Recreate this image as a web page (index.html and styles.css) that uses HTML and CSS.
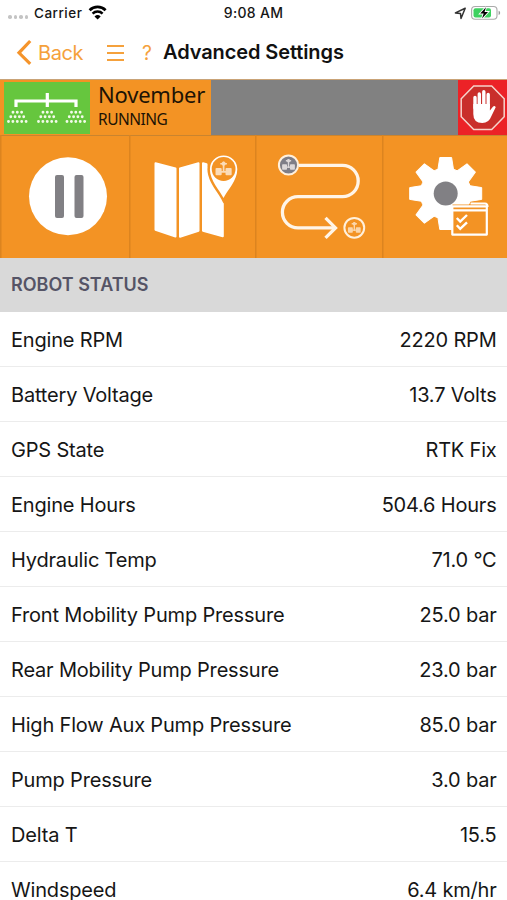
FILE: index.html
```html
<!DOCTYPE html>
<html lang="en">
<head>
<meta charset="utf-8">
<title>Advanced Settings</title>
<link rel="stylesheet" href="styles.css">
</head>
<body>
<svg class="defs" width="0" height="0" aria-hidden="true">
  <symbol id="robot" viewBox="0 0 20 20">
    <path d="M10 2.5v12M6.500 5h7M5 13.500h10" fill="none" stroke="currentColor" stroke-width="1.800"/>
    <circle cx="10" cy="5" r="2.200" fill="currentColor"/>
    <rect x="1.500" y="9.500" width="6.500" height="7.500" rx="1" fill="currentColor"/>
    <rect x="12" y="9.500" width="6.500" height="7.500" rx="1" fill="currentColor"/>
  </symbol>
</svg>
<div class="status-bar">
  <div class="carrier">
    <span class="dots"><i></i><i></i><i></i><i></i></span>
    <span class="carrier-name">Carrier</span>
    <svg width="20" height="16" viewBox="88 5 20 16">
      <path d="M89.6 10.2a11.2 11.2 0 0 1 16 0" fill="none" stroke="#000" stroke-width="2.700"/>
      <path d="M92.6 13.7a7 7 0 0 1 10 0" fill="none" stroke="#000" stroke-width="2.500"/>
      <path d="M97.6 19.600l-3.100-3.100a4.500 4.500 0 0 1 6.200 0z"/>
    </svg>
  </div>
  <time class="clock">9:08 AM</time>
  <div class="indicators">
    <svg width="52" height="18" viewBox="453 4 52 18">
      <path d="M465.2 8.2l-9.8 4.7 5.1.6.5 5z" fill="none" stroke="#333" stroke-width="1.5" stroke-linejoin="round"/>
      <rect x="471.6" y="6.5" width="25.4" height="12.8" rx="3.5" fill="#fff" stroke="#aaa" stroke-width="1.1"/>
      <rect x="473.5" y="8.3" width="17.5" height="9.2" rx="2" fill="#3ed160"/>
      <path d="M498.6 10.8v4.2q1.6-.5 1.6-2.1t-1.6-2.1z" fill="#999"/>
      <path d="M486 7.2l-5.8 6.4h3.5l-1.7 5 6-6.6h-3.5z" stroke="#fff" stroke-width="1.8" paint-order="stroke"/>
    </svg>
  </div>
</div>
<header class="nav">
  <svg class="chevron" width="17" height="28" viewBox="15 39 17 28"><path d="M30.2 41L19 52.8l11.2 11" fill="none" stroke="#f5942b" stroke-width="3.2"/></svg>
  <a class="back">Back</a>
  <span class="menu"><i></i><i></i><i></i></span>
  <span class="help">?</span>
  <h1>Advanced Settings</h1>
</header>
<section class="robot-bar">
  <div class="robot">
    <svg class="sprayer" width="86" height="52" viewBox="4 81 86 52">
      <path d="M16 106v-6h60v6M47.300 92v14" fill="none" stroke="#fff" stroke-width="3.200"/>
      <g fill="none" stroke="#f2fbe9" stroke-width="2.900" stroke-linecap="round">
        <path stroke-dasharray="0 4.300" d="M13 111.200h9M43 111.200h9M71.500 111.200h9"/>
        <path stroke-dasharray="0 4.300" d="M10.800 115.800h13.200M40.800 115.800h13.200M69.300 115.800h13.200"/>
        <path stroke-dasharray="0 4.400" d="M8.500 120.500h18M38.500 120.500h18M67 120.500h18"/>
      </g>
    </svg>
    <div class="robot-label"><strong>November</strong><span>RUNNING</span></div>
  </div>
  <svg class="stop" width="49" height="55" viewBox="458 80 49 55">
    <path d="M473.700 86h18l12.500 12.700v18L491.700 129.500h-18L461.200 116.700v-18z" fill="#c92f2b" stroke="#f6d4cc" stroke-width="1.500"/>
    <path d="M475 108V97.500M479.300 106V94M483.800 106V91.800M488.200 107V94.500" stroke="#fff" stroke-width="3.400" stroke-linecap="round"/>
    <path d="M473.300 104h16.600v6.500l3-3.800q1.800-1.500 2.800.5l-4.500 9.300q-2.300 6.500-8.900 6.500-9 0-9-9z" fill="#fff"/>
  </svg>
</section>
<nav class="actions">
  <div class="tile">
    <svg width="129" height="123" viewBox="0 135 129 123">
      <circle cx="68" cy="196.300" r="39" fill="#fff"/>
      <rect x="55" y="175" width="9" height="43" rx="2" fill="#818084"/>
      <rect x="74.500" y="175" width="9" height="43" rx="2" fill="#818084"/>
    </svg>
  </div>
  <div class="tile">
    <svg width="126" height="123" viewBox="129 135 126 123">
      <g fill="#fff" stroke="#fff" stroke-width="2" stroke-linejoin="round">
        <path d="M155.500 163.200l20 5.300v68l-20-6.700z"/>
        <path d="M180 168.500l18.500-5.300v67.500l-18.500 6z"/>
        <path d="M203 163.200l3.500 1q.3 10 16.300 37v35l-19.800-5.500z"/>
      </g>
      <path d="M223.500 198c-3.500-7-13.600-17.500-13.600-28.700a13.700 13.700 0 0 1 27.400 0c0 11.200-10.300 21.700-13.800 28.700z" fill="#fff" stroke="#f39324" stroke-width="5" paint-order="stroke"/>
      <circle cx="223.600" cy="169" r="11.900" fill="#f39324"/>
      <use href="#robot" x="214.100" y="159" width="19" height="19" color="#fbdcb8"/>
    </svg>
  </div>
  <div class="tile">
    <svg width="127" height="123" viewBox="255 135 127 123">
      <path d="M299 165.300h43.500a15.700 15.700 0 0 1 0 31.400H298a15.600 15.600 0 0 0 0 31.200h37" fill="none" stroke="#fff5e8" stroke-width="3.300"/>
      <path d="M325.500 217.800l10 10.100-10 10" fill="none" stroke="#fff5e8" stroke-width="3.300"/>
      <circle cx="288.500" cy="165" r="9.600" fill="#7f7e86" stroke="#fff0dc" stroke-width="2"/>
      <use href="#robot" x="281" y="157" width="15" height="15" color="#ddd8d8"/>
      <circle cx="354.300" cy="227.800" r="9.900" fill="none" stroke="#fff0dc" stroke-width="2"/>
      <use href="#robot" x="346.800" y="220" width="15" height="15" color="#fbd6aa"/>
    </svg>
  </div>
  <div class="tile">
    <svg width="125" height="123" viewBox="382 135 125 123">
      <defs><path id="tooth" d="M437.500 172l2.300-14.500h11.800l2.300 14.500z"/></defs>
      <g fill="#fff" stroke="#fff" stroke-width="1" stroke-linejoin="round">
        <circle cx="445.700" cy="193.500" r="25.500"/>
        <use href="#tooth"/>
        <use href="#tooth" transform="rotate(45 445.700 193.500)"/>
        <use href="#tooth" transform="rotate(90 445.700 193.500)"/>
        <use href="#tooth" transform="rotate(135 445.700 193.500)"/>
        <use href="#tooth" transform="rotate(180 445.700 193.500)"/>
        <use href="#tooth" transform="rotate(225 445.700 193.500)"/>
        <use href="#tooth" transform="rotate(270 445.700 193.500)"/>
        <use href="#tooth" transform="rotate(315 445.700 193.500)"/>
      </g>
      <circle cx="445.700" cy="193.500" r="12" fill="#818084"/>
      <path d="M452.500 204.500h18v2h18v29h-36z" fill="#f39324"/>
      <path d="M452.300 206.300h34.500v28.300h-34.500zM452 210.300h35M470.500 203.500h14.500q2.500 0 2.500 3.500" fill="none" stroke="#fff" stroke-width="2.200" stroke-linejoin="round"/>
      <path d="M456.800 218l3.400 3.600 6.800-6.600M456.800 225.300l3.400 3.600 6.800-6.600" fill="none" stroke="#fff" stroke-width="2.400"/>
    </svg>
  </div>
</nav>
<h2 class="section-title">ROBOT STATUS</h2>
<dl class="rows">
  <div class="row"><dt>Engine RPM</dt><dd>2220 RPM</dd></div>
  <div class="row"><dt>Battery Voltage</dt><dd>13.7 Volts</dd></div>
  <div class="row"><dt>GPS State</dt><dd>RTK Fix</dd></div>
  <div class="row"><dt>Engine Hours</dt><dd>504.6 Hours</dd></div>
  <div class="row"><dt>Hydraulic Temp</dt><dd>71.0 °C</dd></div>
  <div class="row"><dt>Front Mobility Pump Pressure</dt><dd>25.0 bar</dd></div>
  <div class="row"><dt>Rear Mobility Pump Pressure</dt><dd>23.0 bar</dd></div>
  <div class="row"><dt>High Flow Aux Pump Pressure</dt><dd>85.0 bar</dd></div>
  <div class="row"><dt>Pump Pressure</dt><dd>3.0 bar</dd></div>
  <div class="row"><dt>Delta T</dt><dd>15.5</dd></div>
  <div class="row"><dt>Windspeed</dt><dd>6.4 km/hr</dd></div>
</dl>
</body>
</html>
```
FILE: styles.css
```css
* { box-sizing: border-box; }
html { height: 900px; overflow: hidden; }
body {
  margin: 0;
  width: 507px;
  height: 900px;
  overflow: hidden;
  background: #fff;
  color: #161616;
  font-family: Inter, "Liberation Sans", sans-serif;
}
svg { display: block; flex: none; }
.defs { position: absolute; }
h1, h2, dl, dd { margin: 0; }

.status-bar {
  display: grid;
  grid-template-columns: 1fr auto 1fr;
  align-items: center;
  height: 26px;
  font-size: 13.5px;
  font-weight: 500;
  line-height: 26px;
}
.carrier { display: flex; align-items: center; padding-left: 8px; }
.carrier-name { width: 54px; letter-spacing: 0.5px; }
.clock { font-size: 14px; letter-spacing: 0.3px; }
.dots { display: flex; gap: 2px; width: 26px; padding-top: 8px; }
.dots i { width: 3.5px; height: 3.5px; border-radius: 50%; background: #c4c4c4; }
.indicators { display: flex; justify-content: flex-end; padding-right: 2px; }

.nav {
  display: flex;
  align-items: center;
  height: 53px;
  padding-left: 15px;
  line-height: 54px;
  color: #f5a13c;
}
.back { width: 69px; padding-left: 6px; font-size: 20px; letter-spacing: -0.4px; }
.menu { display: flex; flex-direction: column; gap: 5px; width: 17px; margin-left: 6px; }
.menu i { height: 2px; background: #f5a13c; }
.help { width: 39px; padding-left: 18px; font-size: 19.5px; }
.nav h1 { color: #111; font-size: 20px; font-weight: 600; letter-spacing: -0.1px; line-height: 55px; white-space: nowrap; }

.robot-bar { display: flex; height: 56px; background: #818181; border-top: 1px solid #c9a377; }
.robot { display: flex; padding: 1px 0 0 4px; background: #f39324; }
.sprayer { margin-top: 1px; background: #66c63e; }
.robot-label {
  display: flex;
  flex-direction: column;
  width: 121px;
  padding-left: 8px;
  color: #1d1305;
  font-family: "Noto Sans", "Open Sans", sans-serif;
  white-space: nowrap;
}
.robot-label strong { margin-top: -2px; font-size: 22px; font-weight: 400; letter-spacing: -0.2px; line-height: 30px; }
.robot-label span { font-size: 15.5px; letter-spacing: -0.5px; line-height: 21px; }
.stop { margin-left: auto; background: #ec2227; }

.actions { display: grid; grid-template-columns: 128.5px 126px 127px 125.5px; height: 123px; background: #f39324; }
.tile { box-shadow: inset 1.5px 0 #dc841f, inset 0 1px #c9842f; }

.section-title {
  height: 54px;
  padding-left: 11px;
  background: #d9d9d9;
  color: #555466;
  font-size: 18px;
  font-weight: 600;
  line-height: 54px;
}
.row {
  display: flex;
  justify-content: space-between;
  height: 55px;
  padding: 0 11px;
  border-bottom: 1.5px solid #ececec;
  font-size: 20px;
  line-height: 56px;
  white-space: nowrap;
}
.row dt { letter-spacing: -0.18px; }
.row dd { letter-spacing: -0.2px; margin-right: -0.5px; }
```
